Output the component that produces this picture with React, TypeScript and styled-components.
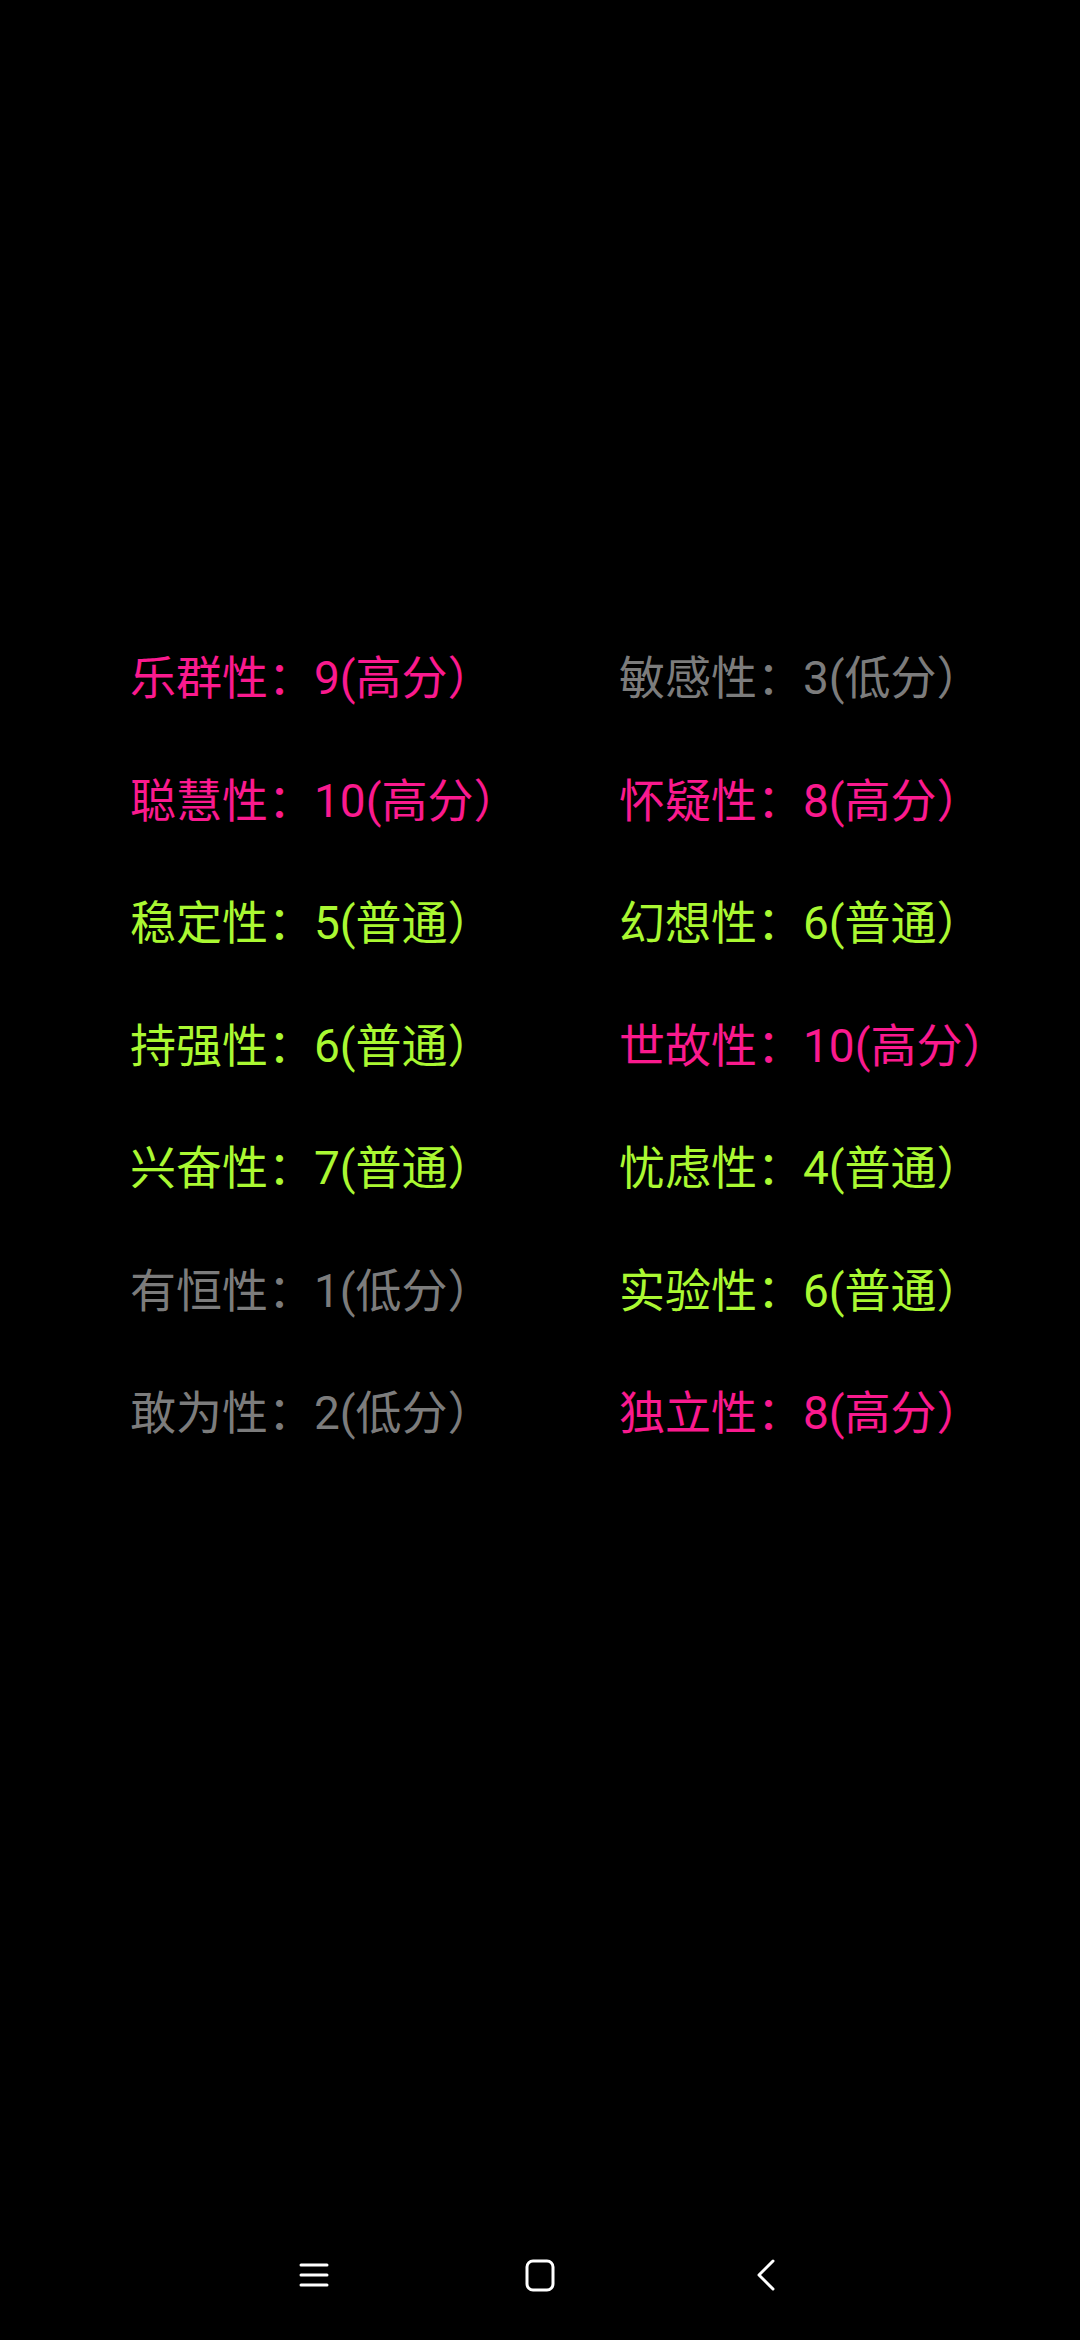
import React from "react";
import styled, { createGlobalStyle } from "styled-components";

const Global = createGlobalStyle`
  html, body { margin: 0; padding: 0; background: #000; }
  #root { min-height: 100vh; }
`;

const Page = styled.div`
  width: 1080px;
  height: 2340px;
  background: #000;
  display: flex;
  flex-direction: column;
  font-family: Roboto, "Noto Sans CJK SC", sans-serif;
`;

const Grid = styled.div`
  margin-top: 617px;
  padding-left: 130px;
  display: grid;
  grid-template-columns: 489px 1fr;
  grid-auto-rows: 122.5px;
`;

type Level = "high" | "mid" | "low";

const colors: Record<Level, string> = {
  high: "#fa1a8e",
  mid: "#aaf832",
  low: "#7c7c7c",
};

const Item = styled.div<{ $level: Level }>`
  color: ${(p) => colors[p.$level]};
  font-size: 46px;
  line-height: 122.5px;
  white-space: nowrap;
`;

const Spacer = styled.div`
  flex: 1;
`;

const NavBar = styled.div`
  height: 90px;
  margin-bottom: 20px;
  display: flex;
  align-items: center;
  justify-content: center;
`;

const NavSlot = styled.div`
  width: 226px;
  display: flex;
  justify-content: center;
  align-items: center;
`;

const label = (s: number): [string, Level] =>
  s >= 8 ? ["高分", "high"] : s <= 3 ? ["低分", "low"] : ["普通", "mid"];

const data: [string, number][] = [
  ["乐群性", 9], ["敏感性", 3],
  ["聪慧性", 10], ["怀疑性", 8],
  ["稳定性", 5], ["幻想性", 6],
  ["持强性", 6], ["世故性", 10],
  ["兴奋性", 7], ["忧虑性", 4],
  ["有恒性", 1], ["实验性", 6],
  ["敢为性", 2], ["独立性", 8],
];

export default function App() {
  return (
    <Page>
      <Global />
      <Grid>
        {data.map(([name, score]) => {
          const [txt, lv] = label(score);
          return (
            <Item key={name} $level={lv}>
              {name}：{score}({txt}）
            </Item>
          );
        })}
      </Grid>
      <Spacer />
      <NavBar>
        <NavSlot>
          <svg width="32" height="28" viewBox="0 0 32 28">
            <g stroke="#fff" strokeWidth="3" strokeLinecap="round">
              <line x1="3" y1="4" x2="29" y2="4" />
              <line x1="3" y1="14" x2="29" y2="14" />
              <line x1="3" y1="24" x2="29" y2="24" />
            </g>
          </svg>
        </NavSlot>
        <NavSlot>
          <svg width="30" height="33" viewBox="0 0 30 33">
            <rect x="2" y="2" width="26" height="29" rx="6" fill="none" stroke="#fff" strokeWidth="3" />
          </svg>
        </NavSlot>
        <NavSlot>
          <svg width="22" height="34" viewBox="0 0 22 34">
            <polyline points="18,3 4,17 18,31" fill="none" stroke="#fff" strokeWidth="3" strokeLinecap="round" strokeLinejoin="round" />
          </svg>
        </NavSlot>
      </NavBar>
    </Page>
  );
}
